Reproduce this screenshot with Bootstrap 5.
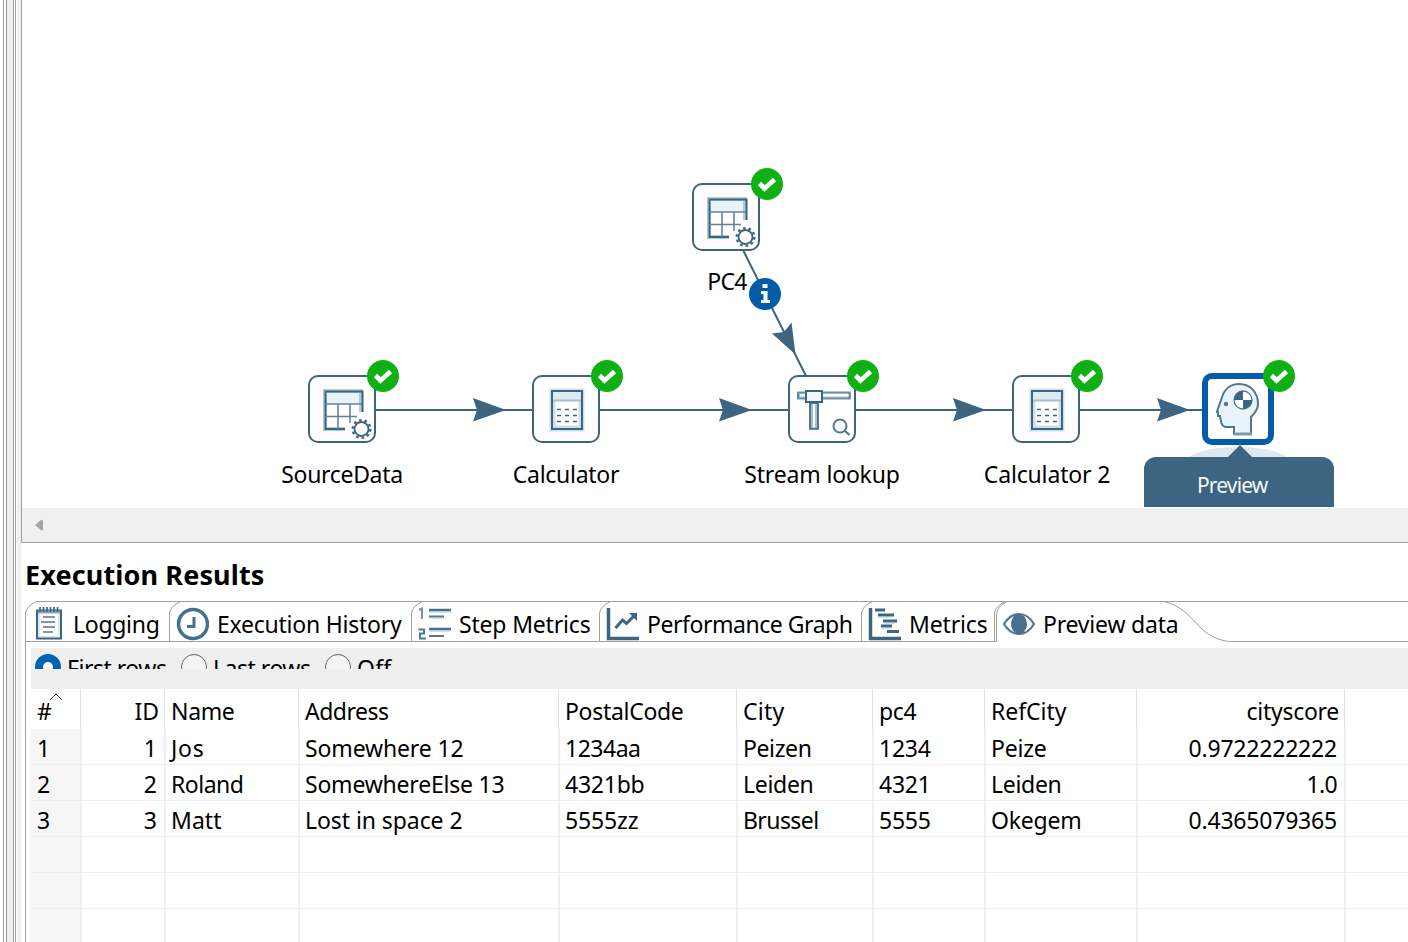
<!DOCTYPE html>
<html lang="en">
<head>
<meta charset="utf-8">
<title>Execution Results</title>
<link href="https://cdn.jsdelivr.net/npm/bootstrap@5.3.0/dist/css/bootstrap.min.css" rel="stylesheet">
<script src="https://cdn.jsdelivr.net/npm/bootstrap@5.3.0/dist/js/bootstrap.bundle.min.js"></script>
<style>
body{font-family:"Noto Sans","Open Sans",sans-serif;font-size:23px;line-height:36px;color:#000;background:#fff}
.app{width:1408px;height:942px}
.rail{width:21px;background:linear-gradient(90deg,#fff 3px,#a0a0a0 3px 4px,#fff 4px 6px,#a0a0a0 6px 7px,#eee 7px 13px,#a0a0a0 13px 14px,#fff 14px 15px,#a0a0a0 15px 16px,#fff 16px 17px,#f0f0f0 17px)}
[data-w]{white-space:nowrap;display:inline-block}
.editor{height:543px;flex:none;border-left:1px solid #a0a0a0;border-bottom:1px solid #a0a0a0}
.canvas{height:508px}
.canvas>.hops{left:-1px;top:0}
.hscroll{height:34px;background:#f0f0f0;padding-left:12px}
.step{width:68px;height:68px}
.step .box{width:68px;height:68px;border:2px solid #3d6480;border-radius:10px;background:#fff;display:block}
.step .ok{left:59px;top:-15px}
.step .cap{top:81px;left:-66px;width:200px;text-align:center;line-height:36px}
.s-pc4{left:670px;top:183px}.s-src{left:286px;top:375px}.s-calc{left:510px;top:375px}
.s-look{left:766px;top:375px}.s-calc2{left:990px;top:375px}.s-prev{left:1182px;top:375px}
.s-pc4 .cap{left:-65px;top:80px}
.s-calc2 .cap{left:-65px}
.s-prev .box{margin:-2px;width:72px;height:72px;border:6px solid #025ca8}
.info{left:727px;top:278px}
.tip{left:1122px;top:457px;width:190px;height:50px;border-radius:12px 12px 0 0;background:#3d6480;color:#f4f8fb;font-size:21px;padding:10px 0 0 53px}
.heading{flex:none;font-size:27px;font-weight:700;line-height:40px;height:58px;padding:12px 0 0 4px;margin:0}
.tabstrip{height:41px;padding-left:4px}
.tabstrip>svg{left:0;top:0}
.tab-item{padding:5px 0 0 10px;gap:8px;height:41px}
.tab-item svg{flex:none;margin-top:1px}
.t1{width:144px;gap:10px}.t2{width:242px}.t3{width:188px}.t4{width:262px}.t5{width:134px}.t6{width:200px}
.t2{padding-left:7px}.t4,.t5{padding-left:7px}.t3{padding-left:6px}.t6{padding-left:7px}
.panel{min-height:0;margin-left:4px;border-left:1px solid #a0a0a0;padding:6px 0 0 5px}
.radios{height:41px;background:#efefef}
.clip{height:21px;overflow:hidden;padding-left:4px}
.clip label{height:40px;padding-top:2px}
.clip .knob{width:26px;height:26px;border:1.5px solid #666;border-radius:50%;margin-top:4px;background:#f5f5f5}
.clip .knob.on{border:8px solid #0063b8;background:#fff}
.r1{width:146px}.r2{width:144px}.r1,.r2,.r3{gap:6px}
.grid-table{table-layout:fixed;width:1377px;margin:0;border-collapse:separate;border-spacing:0}
.grid-table td,.grid-table th{padding:0 7px 0 5px;font-weight:400;white-space:nowrap;overflow:hidden}
.grid-table th{height:40px;border-right:1px solid #e2e2e2;padding-left:6px;padding-right:5px;padding-top:3px;line-height:36px;position:relative}
.grid-table td{height:36px;line-height:32px;padding-top:3px;border-bottom:1px solid #efefef;border-right:2px solid #eef0f5;position:relative;left:1px}
.grid-table tr>:last-child{border-right:0}
.grid-table td:first-child{background:#f6f6f6;box-shadow:-1px 0 #f6f6f6}
.sortmark{left:18px;top:4px}
</style>
</head>
<body>
<svg width="0" height="0" class="position-absolute">
<defs>
<symbol id="ok" viewBox="0 0 32 32"><circle cx="16" cy="16" r="16" fill="#0eb014"/><path d="M8.500 15.500l5 5L23.500 11.500" fill="none" stroke="#fff" stroke-width="4.800"/></symbol>
<symbol id="tbl" viewBox="0 0 64 64"><path d="M14 14h38v12H14z" fill="#e8f3fa"/><path d="M50 35V14H14v38h20" fill="none" stroke="#b6cbda" stroke-width="4"/><path d="M51.500 35V14.500H14.500V52H34" fill="none" stroke="#3d6480" stroke-width="2"/><path d="M14 27h37M14 39.500h32M27 27v25M39 27v19" fill="none" stroke="#5f8098" stroke-width="1.500"/><circle cx="50.500" cy="52" r="7" fill="#fff" stroke="#3d6480" stroke-width="1.800"/><circle cx="50.500" cy="52" r="8.800" fill="none" stroke="#3d6480" stroke-width="2.400" stroke-dasharray="2.600 2.930"/></symbol>
<symbol id="calc" viewBox="0 0 64 64"><path d="M18.500 14.500h29v37h-29z" fill="#fff" stroke="#cfdfe9" stroke-width="6"/><path d="M19 15h28v9H19z" fill="#dce9f1"/><path d="M19 23.500h28" stroke="#a5bdcc" stroke-width="2"/><path d="M18 14h30v38H18z" fill="none" stroke="#3d6480" stroke-width="2"/><path d="M23 32.500h20M23 38.500h20M23 44.500h20" stroke="#3d6480" stroke-width="1.500" stroke-dasharray="4 4"/></symbol>
<symbol id="look" viewBox="0 0 64 64"><path d="M7 14.500h54v8H7z" fill="#a6bece"/><path d="M8 16v5.500M59.500 16v5.500" stroke="#3d6480" stroke-width="2"/><path d="M10 17h49v2.500H10z" fill="#fff"/><path d="M8 15.500h51.500v6H8z" fill="none" stroke="#6d8da3" stroke-width="1.500"/><path d="M20 26h8v26h-8z" fill="#a6bece" stroke="#3d6480" stroke-width="1.700"/><path d="M24 27v23" stroke="#fff" stroke-width="2"/><path d="M16 14h16v11h-16z" fill="#eff7fb" stroke="#3d6480" stroke-width="2"/><circle cx="50" cy="49" r="6.500" fill="#fff" stroke="#54768f" stroke-width="2"/><path d="M54.500 53.500l5 4.500" stroke="#54768f" stroke-width="2.200"/></symbol>
<symbol id="head" viewBox="0 0 60 60"><path d="M9.500 31C11 26 13 22 14 18C17 9 24 5 31 5C43 5 50 14 50 25C50 30 47 34 43 38V55H26V48H18C14 48 13 44 12 37H10V33H9z" fill="#e9f3fa" stroke="#54768f" stroke-width="2"/><path d="M26 55h18" stroke="#7f99ab" stroke-width="3"/><circle cx="18" cy="25" r="2.200" fill="#54768f"/><circle cx="35" cy="21" r="9" fill="#fff" stroke="#54768f" stroke-width="1.300"/><path d="M35 21V12a9 9 0 0 0-9 9zM35 21v9a9 9 0 0 0 9-9z" fill="#3d6480"/></symbol>
</defs></svg>
<div class="app d-flex overflow-hidden">
 <div class="rail flex-shrink-0"></div>
 <main class="flex-grow-1 d-flex flex-column">
  <section class="editor">
   <div class="canvas position-relative overflow-hidden">
    <svg class="hops position-absolute" width="1387" height="508" viewBox="21 0 1387 508">
     <path d="M376 410h156M600 410h188M856 410h156M1080 410h122M743 250L806 376" stroke="#3d6480" stroke-width="2" fill="none"/>
     <g fill="#3d6480"><path id="arw" d="M473 398l33 12-33 11.500 4-11.500z"/><use href="#arw" x="246"/><use href="#arw" x="480"/><use href="#arw" x="684"/><path d="M772 333.500l12-1.500 7.500-9.500 4 32z"/></g>
     <ellipse cx="1238" cy="464" rx="54" ry="17" fill="#dfe8f0"/><path d="M1227 458l13-13 13 13z" fill="#3d6480"/>
    </svg>
    <div class="step position-absolute s-pc4"><div class="box"><svg width="64" height="64"><use href="#tbl" x="1"/></svg></div><svg class="ok position-absolute" width="32" height="32"><use href="#ok"/></svg><div class="cap position-absolute"><span data-w="40">PC4</span></div></div>
    <div class="step position-absolute s-src"><div class="box"><svg width="64" height="64"><use href="#tbl" x="1"/></svg></div><svg class="ok position-absolute" width="32" height="32"><use href="#ok"/></svg><div class="cap position-absolute"><span data-w="122">SourceData</span></div></div>
    <div class="step position-absolute s-calc"><div class="box"><svg width="64" height="64"><use href="#calc"/></svg></div><svg class="ok position-absolute" width="32" height="32"><use href="#ok"/></svg><div class="cap position-absolute"><span data-w="107">Calculator</span></div></div>
    <div class="step position-absolute s-look"><div class="box"><svg width="64" height="64"><use href="#look"/></svg></div><svg class="ok position-absolute" width="32" height="32"><use href="#ok"/></svg><div class="cap position-absolute"><span data-w="156">Stream lookup</span></div></div>
    <div class="step position-absolute s-calc2"><div class="box"><svg width="64" height="64"><use href="#calc"/></svg></div><svg class="ok position-absolute" width="32" height="32"><use href="#ok"/></svg><div class="cap position-absolute"><span data-w="127">Calculator 2</span></div></div>
    <div class="step position-absolute s-prev"><div class="box"><svg class="d-block" width="60" height="60"><use href="#head"/></svg></div><svg class="ok position-absolute" width="32" height="32"><use href="#ok"/></svg></div>
    <svg class="info position-absolute" width="32" height="32" viewBox="0 0 32 32"><circle cx="16" cy="16" r="16" fill="#025ca8"/><path d="M13.500 6h5v4h-5zM12 13h6.500v9H21v3H12v-3h2.500v-6H12z" fill="#fff"/></svg>
    <div class="tip position-absolute"><span data-w="71">Preview</span></div>
   </div>
   <div class="hscroll d-flex align-items-center"><svg width="10" height="12"><path d="M1 6l6-5q2-1 2 1v8q0 2-2 1z" fill="#a3a3a3"/></svg></div>
  </section>
  <h1 class="heading"><span data-w="240">Execution Results</span></h1>
  <nav class="tabstrip position-relative d-flex flex-shrink-0">
   <svg class="position-absolute" width="1387" height="41" viewBox="21 601 1387 41" fill="none" stroke="#a0a0a0"><path d="M36 601.500H1408M25.500 642v-29q1-7 11-11.500M25 641.500H996.500V614q1-8 11-12.500M169.500 641v-28q1-7 11-11.500M411.500 641v-28q1-7 11-11.500M599.500 641v-28q1-7 11-11.500M861.500 641v-28q1-7 11-11.500M994.500 641v-28q1-7 11-11.500M1164 601.500C1197 610 1195 637 1229 641.500H1408"/></svg>
   <div class="tab-item t1 d-flex position-relative"><svg width="28" height="34" viewBox="35 606 28 34"><path d="M37 609.500h24v28H37z" fill="#dce9f2" stroke="#3d6480" stroke-width="2"/><path d="M40 612h18v23H40z" fill="#fff"/><path d="M38 611h22" stroke="#8ba6b8" stroke-width="3"/><path d="M40 606v5M43.500 606v5M47 606v5M50.500 606v5M54 606v5M57.500 606v5" stroke="#3d6480" stroke-width="1.700"/><path d="M43 616h12M41 621h14M43 626h12M43 631h10" stroke="#54768f" stroke-width="1.600"/></svg><span data-w="87">Logging</span></div>
   <div class="tab-item t2 d-flex position-relative"><svg width="33" height="34" viewBox="0 0 33 34"><circle cx="17" cy="17" r="14.500" fill="#fff" stroke="#46708f" stroke-width="3.500"/><path d="M18 10v9.500h-7" fill="none" stroke="#46708f" stroke-width="3"/></svg><span data-w="185">Execution History</span></div>
   <div class="tab-item t3 d-flex position-relative"><svg width="34" height="34" viewBox="417 606 34 34"><path d="M429 609h22M429 628h22" stroke="#46708f" stroke-width="2.500"/><path d="M429 615.500h15M429 635h15" stroke="#54768f" stroke-width="2"/><path d="M429 611h22M429 617h15M429 630h22" stroke="#a9c0d0"/><path d="M419 609l3-1.500V618" fill="none" stroke="#7793a7" stroke-width="2"/><path d="M418.500 628.500h5.500v4h-4v5h6" fill="none" stroke="#54768f" stroke-width="2"/></svg><span data-w="132">Step Metrics</span></div>
   <div class="tab-item t4 d-flex position-relative"><svg width="33" height="34" viewBox="606 606 33 34"><path d="M608.500 607v30.500H639" fill="none" stroke="#3d6480" stroke-width="3.500"/><path d="M615.500 627l7-8 4 3.500 9-9" fill="none" stroke="#3d6480" stroke-width="3"/><path d="M629 612h8v8z" fill="#3d6480"/></svg><span data-w="206">Performance Graph</span></div>
   <div class="tab-item t5 d-flex position-relative"><svg width="33" height="34" viewBox="868 606 33 34"><path d="M870.500 607v30.500H901" fill="none" stroke="#3d6480" stroke-width="3.500"/><path d="M875 609h10M878 614h16M883 620h14M881 625h11M887 630.500h12" stroke="#3d6480" stroke-width="3"/><path d="M878 616h14M884 622h11M881 627h11" stroke="#a9c0d0"/></svg><span data-w="79">Metrics</span></div>
   <div class="tab-item t6 d-flex position-relative"><svg width="33" height="34" viewBox="0 0 33 34"><path d="M2 17Q8 7 17 7T32 17Q26 27 17 27T2 17z" fill="#fff" stroke="#54768f" stroke-width="2.200"/><ellipse cx="17" cy="17" rx="8" ry="10" fill="#46708f"/></svg><span data-w="136">Preview data</span></div>
  </nav>
  <section class="panel flex-grow-1">
   <div class="radios"><div class="clip d-flex">
    <label class="r1 d-flex"><span class="knob on flex-shrink-0"></span><span data-w="100">First rows</span></label>
    <label class="r2 d-flex"><span class="knob flex-shrink-0"></span><span data-w="98">Last rows</span></label>
    <label class="r3 d-flex"><span class="knob flex-shrink-0"></span><span data-w="35">Off</span></label>
   </div></div>
   <table class="grid-table">
    <colgroup><col width="50"><col width="84"><col width="134"><col width="260"><col width="178"><col width="136"><col width="112"><col width="152"><col width="208"><col></colgroup>
    <thead><tr><th>#<svg class="sortmark position-absolute" width="14" height="8"><path d="M1 7l6-6 6 6" fill="none" stroke="#444"/></svg></th><th class="text-end">ID</th><th><span data-w="64">Name</span></th><th><span data-w="84">Address</span></th><th><span data-w="119">PostalCode</span></th><th><span data-w="42">City</span></th><th><span data-w="38">pc4</span></th><th><span data-w="76">RefCity</span></th><th class="text-end"><span data-w="93">cityscore</span></th><th></th></tr></thead>
    <tbody>
     <tr><td>1</td><td class="text-end">1</td><td><span data-w="34">Jos</span></td><td><span data-w="159">Somewhere 12</span></td><td><span data-w="76">1234aa</span></td><td><span data-w="69">Peizen</span></td><td><span data-w="52">1234</span></td><td><span data-w="56">Peize</span></td><td class="text-end"><span data-w="149">0.9722222222</span></td><td></td></tr>
     <tr><td>2</td><td class="text-end">2</td><td><span data-w="73">Roland</span></td><td><span data-w="200">SomewhereElse 13</span></td><td><span data-w="80">4321bb</span></td><td><span data-w="71">Leiden</span></td><td><span data-w="52">4321</span></td><td><span data-w="71">Leiden</span></td><td class="text-end"><span data-w="31">1.0</span></td><td></td></tr>
     <tr><td>3</td><td class="text-end">3</td><td><span data-w="51">Matt</span></td><td><span data-w="158">Lost in space 2</span></td><td><span data-w="74">5555zz</span></td><td><span data-w="76">Brussel</span></td><td><span data-w="52">5555</span></td><td><span data-w="91">Okegem</span></td><td class="text-end"><span data-w="149">0.4365079365</span></td><td></td></tr>
     <tr><td></td><td></td><td></td><td></td><td></td><td></td><td></td><td></td><td></td><td></td></tr>
     <tr><td></td><td></td><td></td><td></td><td></td><td></td><td></td><td></td><td></td><td></td></tr>
     <tr><td></td><td></td><td></td><td></td><td></td><td></td><td></td><td></td><td></td><td></td></tr>
    </tbody>
   </table>
  </section>
 </main>
</div>
<script>
// Track each label so that it fills its nominal width.
document.querySelectorAll('[data-w]').forEach(function (el) {
  var r = document.createRange();
  r.selectNodeContents(el);
  var gap = (Number(el.dataset.w) - 0.5 - r.getBoundingClientRect().width) / el.textContent.length;
  el.style.letterSpacing = gap.toFixed(3) + 'px';
});
</script>
</body>
</html>
